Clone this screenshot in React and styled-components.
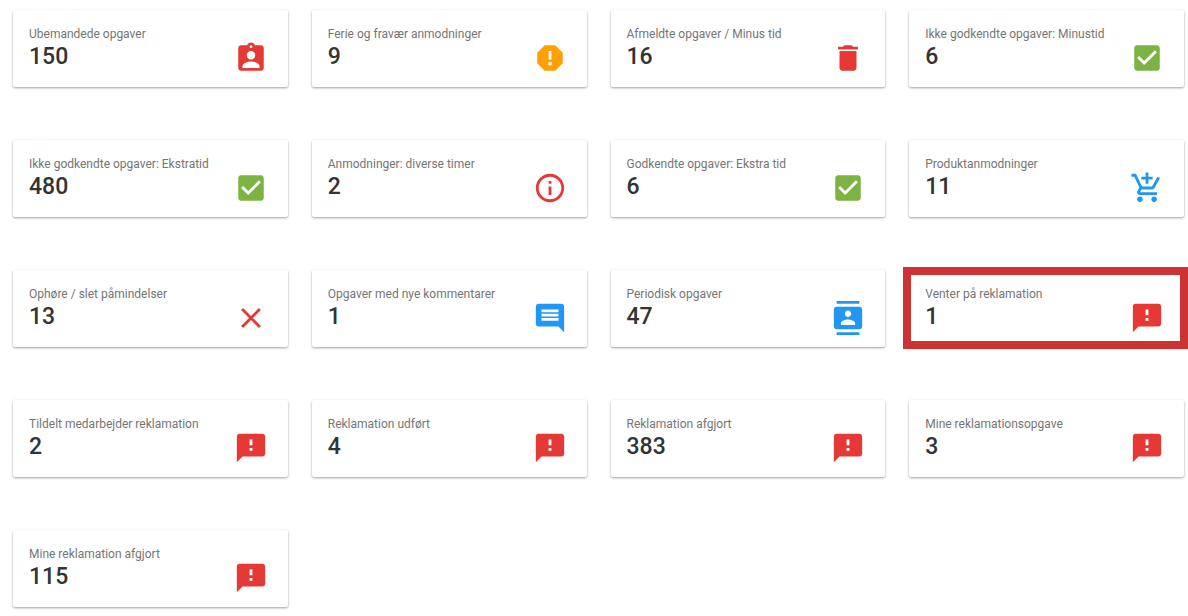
import React from "react";
import styled, { createGlobalStyle } from "styled-components";
import {
  MdAddShoppingCart,
  MdClose,
  MdComment,
  MdContacts,
  MdDelete,
  MdFeedback,
  MdInfoOutline,
  MdReport,
} from "react-icons/md";

const colors = {
  red: "#e53935",
  orange: "#ffa000",
  green: "#7cb342",
  blue: "#2196f3",
  highlight: "#cc3333",
};

const GlobalStyle = createGlobalStyle`
  * {
    box-sizing: border-box;
  }

  body {
    margin: 0;
    background: #fff;
    font-family: Roboto, "Noto Sans", sans-serif;
  }
`;

const Grid = styled.main`
  display: grid;
  grid-template-columns: repeat(4, minmax(0, 1fr));
  gap: 53px 24px;
  padding: 10px 4px 8px 13px;

  @media (max-width: 900px) {
    grid-template-columns: repeat(2, minmax(0, 1fr));
  }
`;

const Card = styled.article`
  position: relative;
  display: flex;
  align-items: flex-end;
  justify-content: space-between;
  padding: 16px 20px 12px 16px;
  background: #fff;
  border-radius: 2px;
  box-shadow: 0 1px 3px rgba(0, 0, 0, 0.2), 0 1px 2px rgba(0, 0, 0, 0.2);

  /* red frame lying over the card that needs attention */
  &::after {
    content: "";
    display: ${(props) => (props.$highlighted ? "block" : "none")};
    position: absolute;
    inset: -3px -4px -2px -6px;
    border: 8px solid ${colors.highlight};
  }
`;

const Info = styled.div`
  min-width: 0;
  height: 49px;
`;

const Label = styled.h2`
  margin: 0;
  font-size: 12px;
  line-height: 16px;
  font-weight: 400;
  color: #757575;
  white-space: nowrap;
`;

const Value = styled.p`
  margin: 0;
  font-size: 23px;
  line-height: 30px;
  font-weight: 500;
  color: #333;
`;

const IconBox = styled.span`
  display: flex;
  flex: none;
  font-size: 34px;
  color: ${(props) => props.$color};
`;

const BadgeIcon = (props) => (
  <svg viewBox="0 0 24 24" width="1em" height="1em" fill="currentColor" {...props}>
    <path d="M19 3h-4.18C14.4 1.84 13.3 1 12 1c-1.3 0-2.4.84-2.82 2H5c-1.1 0-2 .9-2 2v14c0 1.1.9 2 2 2h14c1.1 0 2-.9 2-2V5c0-1.1-.9-2-2-2zm-7 0c.55 0 1 .45 1 1s-.45 1-1 1-1-.45-1-1 .45-1 1-1zm0 4c1.66 0 3 1.34 3 3s-1.34 3-3 3-3-1.34-3-3 1.34-3 3-3zm6 12H6v-1.4c0-2 4-3.1 6-3.1s6 1.1 6 3.1V19z" />
  </svg>
);

const CheckIcon = (props) => (
  <svg viewBox="0 0 24 24" width="1em" height="1em" fill="currentColor" {...props}>
    <path d="M19 3H5c-1.11 0-2 .9-2 2v14c0 1.1.89 2 2 2h14c1.11 0 2-.9 2-2V5c0-1.1-.89-2-2-2zm-9 14l-5-5 1.41-1.41L10 14.17l7.59-7.59L19 8l-9 9z" />
  </svg>
);

const tasks = [
  { label: "Ubemandede opgaver", value: 150, icon: BadgeIcon, color: colors.red },
  { label: "Ferie og fravær anmodninger", value: 9, icon: MdReport, color: colors.orange },
  { label: "Afmeldte opgaver / Minus tid", value: 16, icon: MdDelete, color: colors.red },
  { label: "Ikke godkendte opgaver: Minustid", value: 6, icon: CheckIcon, color: colors.green },
  { label: "Ikke godkendte opgaver: Ekstratid", value: 480, icon: CheckIcon, color: colors.green },
  { label: "Anmodninger: diverse timer", value: 2, icon: MdInfoOutline, color: colors.red },
  { label: "Godkendte opgaver: Ekstra tid", value: 6, icon: CheckIcon, color: colors.green },
  { label: "Produktanmodninger", value: 11, icon: MdAddShoppingCart, color: colors.blue },
  { label: "Ophøre / slet påmindelser", value: 13, icon: MdClose, color: colors.red },
  { label: "Opgaver med nye kommentarer", value: 1, icon: MdComment, color: colors.blue },
  { label: "Periodisk opgaver", value: 47, icon: MdContacts, color: colors.blue },
  { label: "Venter på reklamation", value: 1, icon: MdFeedback, color: colors.red, highlighted: true },
  { label: "Tildelt medarbejder reklamation", value: 2, icon: MdFeedback, color: colors.red },
  { label: "Reklamation udført", value: 4, icon: MdFeedback, color: colors.red },
  { label: "Reklamation afgjort", value: 383, icon: MdFeedback, color: colors.red },
  { label: "Mine reklamationsopgave", value: 3, icon: MdFeedback, color: colors.red },
  { label: "Mine reklamation afgjort", value: 115, icon: MdFeedback, color: colors.red },
];

const TaskCard = ({ label, value, icon: Icon, color, highlighted }) => {
  return (
    <Card $highlighted={highlighted}>
      <Info>
        <Label>{label}</Label>
        <Value>{value}</Value>
      </Info>
      <IconBox $color={color}>
        <Icon aria-hidden="true" />
      </IconBox>
    </Card>
  );
};

const App = () => {
  return (
    <>
      <GlobalStyle />
      <Grid>
        {tasks.map((task) => (
          <TaskCard key={task.label} {...task} />
        ))}
      </Grid>
    </>
  );
};

export default App;
